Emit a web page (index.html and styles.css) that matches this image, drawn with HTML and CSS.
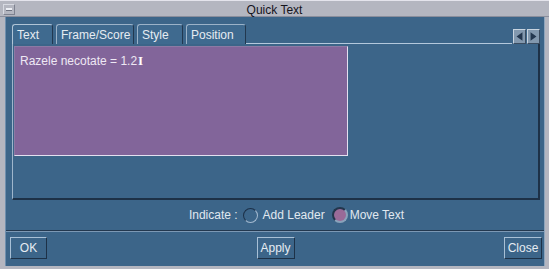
FILE: index.html
```html
<!DOCTYPE html>
<html lang="en">

<head>
  <meta charset="UTF-8" />
  <title>Quick Text</title>
  <link rel="stylesheet" href="styles.css">
</head>

<body>
  <div class="win">
    <div class="titlebar">
      <span class="menu"></span>
      <span class="title">Quick Text</span>
    </div>
    <div class="client">
      <div class="tabs">
        <div class="tab active">Text</div>
        <div class="tab">Frame/Score</div>
        <div class="tab">Style</div>
        <div class="tab">Position</div>
        <div class="tabline"></div>
        <div class="arrows">
          <span class="arr"><svg width="13" height="14" viewBox="0 0 13 14"><path d="M10 2 L3 7 L10 12 Z" fill="#23374f" /></svg></span>
          <span class="arr"><svg width="13" height="14" viewBox="0 0 13 14"><path d="M3 2 L10 7 L3 12 Z" fill="#23374f" /></svg></span>
        </div>
      </div>
      <div class="panel">
        <div class="textarea">Razele necotate = 1.2<span class="caret">I</span></div>
      </div>
      <div class="indicate">
        <span>Indicate :</span>
        <label><span class="radio"></span>Add Leader</label>
        <label><span class="radio on"></span>Move Text</label>
      </div>
      <div class="sep"></div>
      <div class="buttons">
        <button>OK</button>
        <button>Apply</button>
        <button>Close</button>
      </div>
    </div>
  </div>
</body>

</html>
```

FILE: styles.css
```css
body {
  margin: 0;
  padding: 0;
  background: #b4b6c0;
  font-family: "Liberation Sans", Arial, sans-serif;
}

.win {
  width: 549px;
  height: 269px;
  background: #b4b6c0;
  display: flex;
  flex-direction: column;
  box-sizing: border-box;
  border-top: 1px solid #e4e4ec;
}

.titlebar {
  height: 15px;
  display: flex;
  align-items: center;
  border-bottom: 1px solid #8a8e9c;
}

.menu {
  width: 12px;
  height: 11px;
  margin-left: 3px;
  margin-top: 2px;
  border: 1px solid #d8dae2;
  border-right-color: #7e8290;
  border-bottom-color: #7e8290;
  box-sizing: border-box;
  display: flex;
  align-items: center;
  justify-content: center;
}

.menu::before {
  content: "";
  width: 6px;
  height: 2px;
  background: #eceef4;
  border-bottom: 1px solid #6e7280;
}

.title {
  flex: 1;
  text-align: center;
  font-size: 12px;
  color: #14141c;
  margin-right: 15px;
  margin-top: 2px;
}

.client {
  flex: 1;
  margin: 0 4px 3px 5px;
  background: #3c6589;
  display: flex;
  flex-direction: column;
  border-left: 1px solid #6f8fae;
  border-right: 1px solid #8da5bd;
}

.tabs {
  display: flex;
  align-items: flex-end;
  height: 27px;
  padding-left: 6px;
  margin-right: 4px;
}

.tab {
  height: 20px;
  box-sizing: border-box;
  padding: 3px 0 0 4px;
  margin-right: 3px;
  font-size: 12px;
  white-space: nowrap;
  color: #e6ecf2;
  border: 1px solid #9bb2c8;
  border-bottom: none;
  border-right-color: #22384f;
  border-radius: 3px 3px 0 0;
  background: #3f6a8f;
}

.tab.active {
  width: 41px;
  border-color: #b0c4d6;
  border-right-color: #22384f;
}

.tab:nth-child(2) { width: 78px; }
.tab:nth-child(3) { width: 46px; }
.tab:nth-child(4) { width: 60px; margin-right: 0; }

.tabline {
  flex: 1;
  border-bottom: 1px solid #b4c8dc;
}

.arrows {
  display: flex;
}

.arr {
  width: 13px;
  height: 15px;
  box-sizing: border-box;
  background: #8298ae;
  border: 1px solid #c8d4e0;
  border-right-color: #3a4c60;
  border-bottom-color: #3a4c60;
  margin-left: 1px;
  display: flex;
}

.arr svg {
  width: 11px;
  height: 13px;
}

.panel {
  height: 156px;
  margin: 0 4px 0 6px;
  box-sizing: border-box;
  border-left: 1px solid #9fb6cc;
  border-right: 2px solid #1d3147;
  border-bottom: 2px solid #1d3147;
  padding: 2px 0 0 1px;
}

.textarea {
  width: 334px;
  height: 110px;
  box-sizing: border-box;
  background: #82659a;
  border: 1px solid #e4e0f0;
  border-top-color: #8c7aa4;
  border-left-color: #8c7aa4;
  color: #eee8f4;
  font-size: 12px;
  padding: 6px 0 0 5px;
}

.caret {
  font-family: "Liberation Serif", serif;
  font-weight: bold;
  color: #ffffff;
  font-size: 13px;
  margin-left: 1px;
}

.indicate {
  height: 30px;
  display: flex;
  align-items: center;
  justify-content: center;
  padding-left: 43px;
  font-size: 12px;
  color: #e0e8f0;
}

.indicate > span {
  margin-right: 5px;
}

.indicate label {
  display: flex;
  align-items: center;
  margin-right: 7px;
}

.indicate label:last-child {
  margin-right: 0;
}

.radio {
  width: 15px;
  height: 15px;
  box-sizing: border-box;
  border-radius: 50%;
  border: 1px solid #a4bad0;
  border-left-color: #1c3048;
  border-top-color: #1c3048;
  margin-right: 5px;
}

.radio.on {
  width: 16px;
  height: 16px;
  background: #9a6a98;
  border: 2px solid #23364c;
  border-right-color: #8aa2ba;
  border-bottom-color: #8aa2ba;
  margin-right: 2px;
}

.sep {
  height: 1px;
  background: #23384f;
  border-bottom: 1px solid #7c98b4;
}

.buttons {
  flex: 1;
  display: flex;
  justify-content: space-between;
  padding: 5px 2px 0 4px;
}

button {
  height: 22px;
  background: #3c6589;
  color: #e6ecf2;
  font-family: "Liberation Sans", Arial, sans-serif;
  font-size: 12px;
  border: 1px solid #a8c0d6;
  border-right-color: #1d3147;
  border-bottom-color: #1d3147;
  padding: 0;
}

button:nth-child(1) { width: 37px; }
button:nth-child(2) { width: 38px; }
button:nth-child(3) { width: 38px; }
```
